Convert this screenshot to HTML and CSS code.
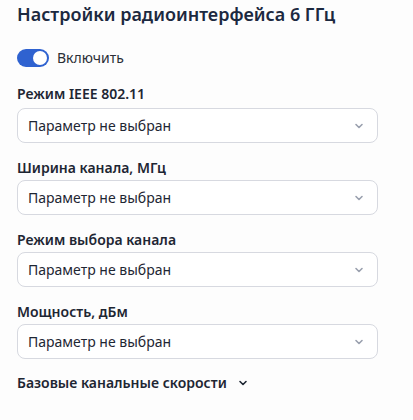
FILE: index.html
```html
<!DOCTYPE html>
<html lang="ru">
<head>
<meta charset="utf-8">
<link rel="stylesheet" href="styles.css">
</head>
<body>
<div class="panel">
  <h2 class="title">Настройки радиоинтерфейса 6 ГГц</h2>
  <label class="switch-row">
    <span class="switch"><span class="knob"></span></span>
    <span class="switch-text">Включить</span>
  </label>
  <div class="field first">
    <div class="label">Режим IEEE 802.11</div>
    <div class="select"><span>Параметр не выбран</span><svg class="chev" width="12" height="12" viewBox="0 0 12 12"><path d="M3 4.5 L6 7.5 L9 4.5" fill="none" stroke="#9aa0ae" stroke-width="1.6" stroke-linecap="round" stroke-linejoin="round"/></svg></div>
  </div>
  <div class="field">
    <div class="label">Ширина канала, МГц</div>
    <div class="select"><span>Параметр не выбран</span><svg class="chev" width="12" height="12" viewBox="0 0 12 12"><path d="M3 4.5 L6 7.5 L9 4.5" fill="none" stroke="#9aa0ae" stroke-width="1.6" stroke-linecap="round" stroke-linejoin="round"/></svg></div>
  </div>
  <div class="field">
    <div class="label">Режим выбора канала</div>
    <div class="select"><span>Параметр не выбран</span><svg class="chev" width="12" height="12" viewBox="0 0 12 12"><path d="M3 4.5 L6 7.5 L9 4.5" fill="none" stroke="#9aa0ae" stroke-width="1.6" stroke-linecap="round" stroke-linejoin="round"/></svg></div>
  </div>
  <div class="field">
    <div class="label">Мощность, дБм</div>
    <div class="select"><span>Параметр не выбран</span><svg class="chev" width="12" height="12" viewBox="0 0 12 12"><path d="M3 4.5 L6 7.5 L9 4.5" fill="none" stroke="#9aa0ae" stroke-width="1.6" stroke-linecap="round" stroke-linejoin="round"/></svg></div>
  </div>
  <div class="collapse">
    <span>Базовые канальные скорости</span>
    <svg width="12" height="12" viewBox="0 0 12 12"><path d="M3 4.5 L6 7.5 L9 4.5" fill="none" stroke="#1e2633" stroke-width="1.6" stroke-linecap="round" stroke-linejoin="round"/></svg>
  </div>
</div>
</body>
</html>
```
FILE: styles.css
```css
html, body {
  margin: 0;
  padding: 0;
  background: #fdfdfd;
}
body {
  font-family: "Noto Sans", "Open Sans", sans-serif;
  color: #1e2633;
}
.panel {
  width: 361px;
  padding: 2px 0 0 17px;
}
.title {
  margin: 0;
  font-size: 18px;
  line-height: 24px;
  font-weight: 600;
  color: #1c2940;
}
.switch-row {
  display: flex;
  align-items: center;
  gap: 8px;
  margin-top: 22px;
  height: 20px;
}
.switch {
  position: relative;
  width: 32px;
  height: 18px;
  border-radius: 9px;
  background: #2f62d0;
  flex: none;
}
.knob {
  position: absolute;
  top: 2px;
  right: 2px;
  width: 14px;
  height: 14px;
  border-radius: 50%;
  background: #fff;
}
.switch-text {
  font-size: 14px;
  line-height: 20px;
  color: #2b2f36;
}
.field {
  margin-top: 15px;
}
.field.first {
  margin-top: 16px;
}
.label {
  font-size: 14px;
  line-height: 20px;
  font-weight: 600;
  color: #1e2633;
  margin-bottom: 2px;
}
.field.first .label {
  margin-bottom: 4px;
}
.select {
  box-sizing: border-box;
  height: 35px;
  border: 1px solid #d7d9e0;
  border-radius: 8px;
  background: #fff;
  display: flex;
  align-items: center;
  justify-content: space-between;
  padding: 0 12px 0 10px;
  font-size: 14px;
  color: #1e2633;
}
.chev {
  flex: none;
}
.collapse {
  margin-top: 14px;
  display: flex;
  align-items: center;
  gap: 10px;
  font-size: 14px;
  line-height: 20px;
  font-weight: 600;
}
```
